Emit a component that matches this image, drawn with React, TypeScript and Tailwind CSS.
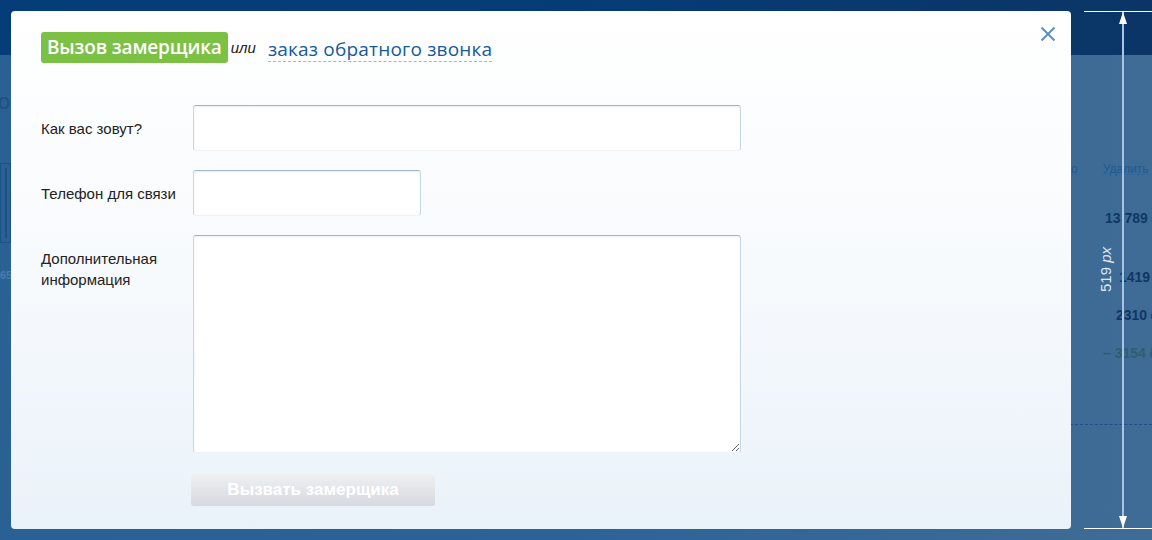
import React from 'react';

const sans = 'font-["Liberation_Sans",Arial,sans-serif]';
const open = 'font-["Open_Sans","Noto_Sans",sans-serif]';

function Field({ label, children }: { label: React.ReactNode; children: React.ReactNode }) {
  return (
    <div className="flex items-start">
      <div className="w-[152px] shrink-0 text-[15px] leading-[21px] text-[#222] pt-[13px]">{label}</div>
      {children}
    </div>
  );
}

const inputCls =
  'block bg-white rounded-[3px] border border-t-[#9fb4cb] border-x-[#c9d6e3] border-b-[#eef2f6] shadow-[inset_0_1px_2px_rgba(0,40,90,0.08)] outline-none px-2 text-[14px]';

export default function App() {
  return (
    <div className={`relative w-[1152px] h-[540px] overflow-hidden ${sans}`}>
      {/* page behind the overlay */}
      <div className="flex flex-col h-full">
        <div className="h-[55px] bg-gradient-to-r from-[#053d79] via-[#063c76] to-[#0b3566]" />
        <div className="flex-1 flex bg-gradient-to-r from-[#2a6195] via-[#2c6397] to-[#3f6c95]">
          <div className="w-[11px] shrink-0 flex flex-col pt-[34px] overflow-hidden">
            <span className="text-[22px] leading-[26px] text-[#1f4f82] -ml-[2px] whitespace-nowrap">ос</span>
            <div className="mt-[48px] h-[80px] border border-[#1e5186] flex p-[4px]">
              <div className="flex-1 border border-[#1e5186]" />
            </div>
            <span className="mt-[24px] text-[11px] font-bold text-[#4a7cae]">65</span>
          </div>
          <div className="flex-1" />
          <div className="w-[82px] shrink-0 flex flex-col pt-[105px] text-[12px]">
            <div className="flex gap-[25px] -ml-[3px] text-[#1d5a94]">
              <span className="underline decoration-[#35669a]">го</span>
              <span className="underline decoration-[#35669a] whitespace-nowrap">Удалить</span>
            </div>
            <div className="mt-[30px] ml-[35px] font-bold text-[14px] text-[#0f3766] whitespace-nowrap">13 789 ₽</div>
            <div className="mt-[38px] ml-[49px] font-bold text-[14px] text-[#0f3766] whitespace-nowrap">1419 ₽</div>
            <div className="mt-[17px] ml-[46px] font-bold text-[14px] text-[#0f3766] whitespace-nowrap">2310 ₽</div>
            <div className="mt-[17px] ml-[33px] font-bold text-[14px] text-[#2f5e6e] whitespace-nowrap">– 3154 ₽</div>
            <div className="mt-[60px] border-t border-dashed border-[#1c4f84]" />
          </div>
        </div>
      </div>

      {/* modal */}
      <div className="absolute left-[11px] top-[11px] w-[1060px] h-[518px] rounded-[4px] bg-gradient-to-b from-white via-[#f7fafd] to-[#eaf2f9] pl-[30px] pt-[21px]">
        <button className="absolute right-[15px] top-[15px] text-[#5a8fc3]">
          <svg width="16" height="16" viewBox="0 0 16 16" fill="none" stroke="currentColor" strokeWidth="2">
            <path d="M1.5 1.5 14.5 14.5M14.5 1.5 1.5 14.5" />
          </svg>
        </button>

        <div className={`flex items-center ${open}`}>
          <span className="bg-[#7cc143] text-white text-[19px] font-semibold rounded-[3px] h-[31px] px-[6px] leading-[31px] tracking-[-0.15px]">
            Вызов замерщика
          </span>
          <span className={`${sans} italic text-[15px] text-[#222] ml-[3px] mt-[2px]`}>или</span>
          <span className="ml-[12px] text-[19px] text-[#17599c] leading-[24px] tracking-[0.2px] border-b border-dashed border-[#9cb7d4] mt-[4px]">
            заказ обратного звонка
          </span>
        </div>

        <div className="flex flex-col gap-[19px] mt-[42px]">
          <Field label="Как вас зовут?">
            <input className={`${inputCls} w-[548px] h-[46px]`} />
          </Field>
          <Field label="Телефон для связи">
            <input className={`${inputCls} w-[228px] h-[46px]`} />
          </Field>
          <Field
            label={
              <>
                Дополнительная
                <br />
                информация
              </>
            }
          >
            <textarea className={`${inputCls} w-[548px] h-[218px] resize`} />
          </Field>
        </div>

        <button className="mt-[21px] ml-[150px] w-[244px] h-[32px] rounded-[3px] bg-gradient-to-b from-[#eff0f2] to-[#d6d9de] text-white font-bold text-[17px]">
          Вызвать замерщика
        </button>
      </div>

      {/* dimension annotation */}
      <div className="absolute left-[1083px] top-[11px] w-[79px] h-[518px] flex justify-center">
        <div className="relative w-[2px] h-full bg-[#a9c5e2]">
          <div className="absolute -left-[38px] top-0 w-[79px] h-[1px] bg-white" />
          <div className="absolute -left-[38px] bottom-0 w-[79px] h-[1px] bg-white" />
          <div className="absolute -left-[3px] top-[1px] w-0 h-0 border-x-[4px] border-x-transparent border-b-[12px] border-b-white" />
          <div className="absolute -left-[3px] bottom-[1px] w-0 h-0 border-x-[4px] border-x-transparent border-t-[12px] border-t-white" />
        </div>
        <div className="absolute left-[12px] top-[236px] [writing-mode:vertical-rl] rotate-180 text-[15px] text-[#dfe9f4] whitespace-nowrap">
          519 <i>px</i>
        </div>
      </div>
    </div>
  );
}
